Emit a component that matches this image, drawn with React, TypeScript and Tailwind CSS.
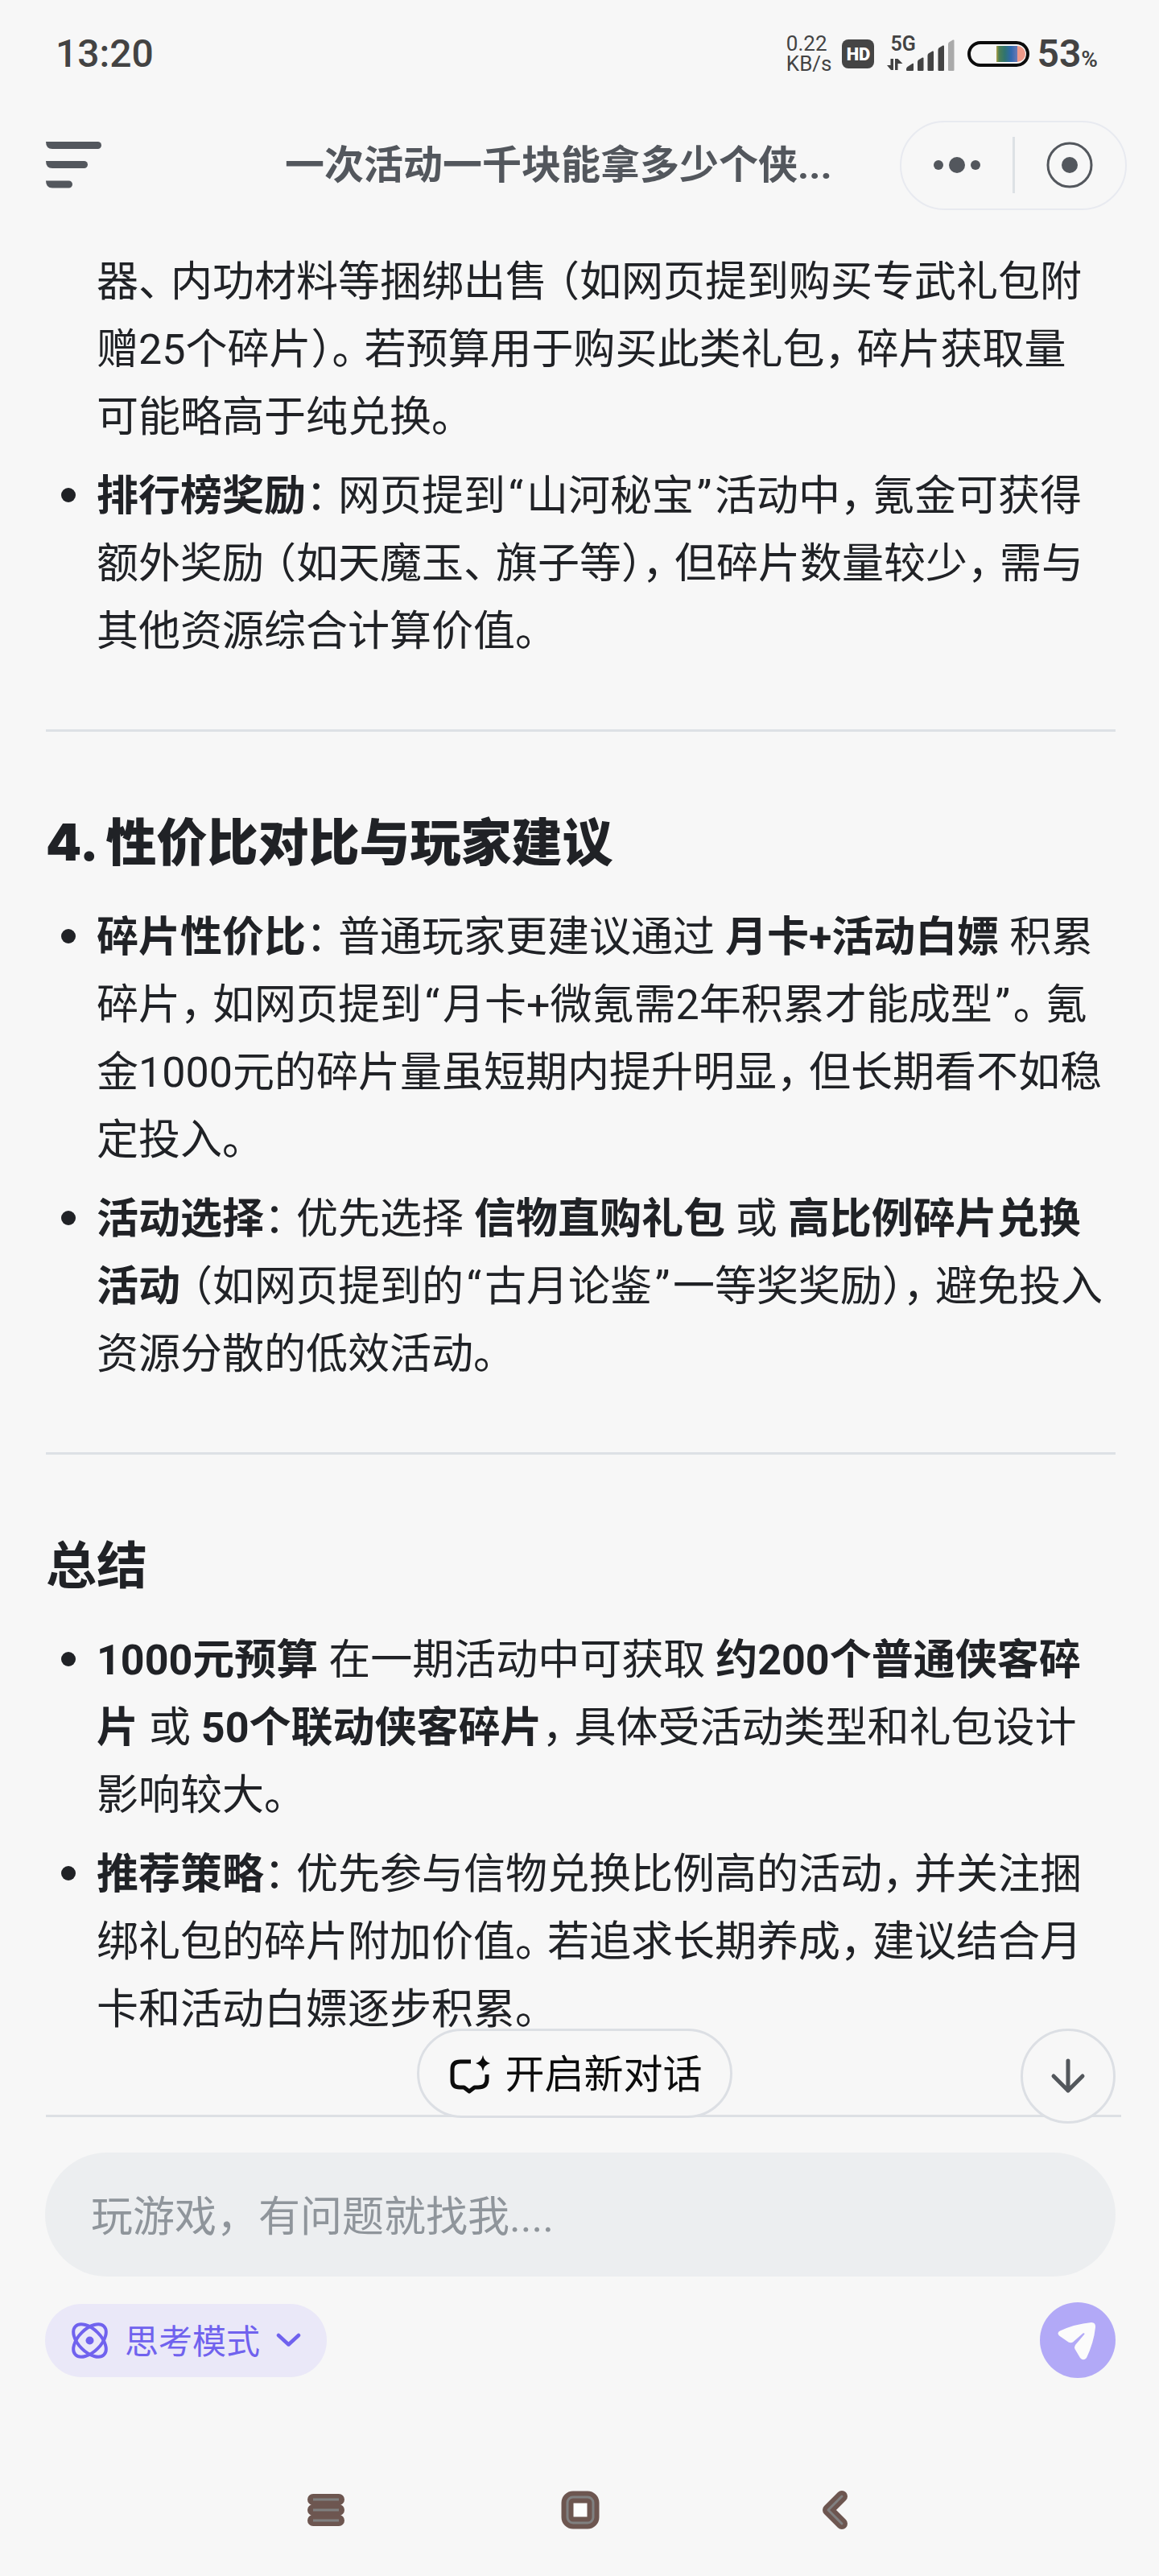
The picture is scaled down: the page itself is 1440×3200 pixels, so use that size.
import type { ReactNode } from "react"

const sections = [
  {
    title: "",
    items: [
      {
        continued: true,
        lines: [
          "器、内功材料等捆绑出售（如网页提到购买专武礼包附",
          "赠25个碎片）。若预算用于购买此类礼包，碎片获取量",
          "可能略高于纯兑换。",
        ],
      },
      {
        lines: [
          "**排行榜奖励**：网页提到“山河秘宝”活动中，氪金可获得",
          "额外奖励（如天魔玉、旗子等），但碎片数量较少，需与",
          "其他资源综合计算价值。",
        ],
      },
    ],
  },
  {
    title: "4. 性价比对比与玩家建议",
    heavy: true,
    items: [
      {
        lines: [
          "**碎片性价比**：普通玩家更建议通过 **月卡+活动白嫖** 积累",
          "碎片，如网页提到“月卡+微氪需2年积累才能成型”。氪",
          "金1000元的碎片量虽短期内提升明显，但长期看不如稳",
          "定投入。",
        ],
      },
      {
        lines: [
          "**活动选择**：优先选择 **信物直购礼包** 或 **高比例碎片兑换**",
          "**活动**（如网页提到的“古月论鉴”一等奖奖励），避免投入",
          "资源分散的低效活动。",
        ],
      },
    ],
  },
  {
    title: "总结",
    items: [
      {
        lines: [
          "**1000元预算** 在一期活动中可获取 **约200个普通侠客碎**",
          "**片** 或 **50个联动侠客碎片**，具体受活动类型和礼包设计",
          "影响较大。",
        ],
      },
      {
        lines: [
          "**推荐策略**：优先参与信物兑换比例高的活动，并关注捆",
          "绑礼包的碎片附加价值。若追求长期养成，建议结合月",
          "卡和活动白嫖逐步积累。",
        ],
      },
    ],
  },
]

// Full-width punctuation is set narrower than a full character.
function punctuate(text: string) {
  return text.split(/(）(?=[，。])|[（）“”，。、：])/).map((part, i) => {
    if (i % 2 === 0) return part
    const next = text[text.indexOf(part) + 1]
    let style = "w-10 text-left"
    if (part === "（") style = "w-10 text-right"
    if (part === "“" || part === "”") style = "w-[26px] text-center"
    if (part === "）" && (next === "，" || next === "。")) style = "w-[26px] text-left"
    return (
      <span key={i} className={`inline-block [font-feature-settings:'halt'] ${style}`}>
        {part}
      </span>
    )
  })
}

function Line({ text }: { text: string }) {
  const parts: ReactNode[] = text
    .split("**")
    .map((part, i) =>
      i % 2 === 1 ? (
        <strong key={i} className="font-bold">
          {part}
        </strong>
      ) : (
        <span key={i}>{punctuate(part)}</span>
      ),
    )
  return <span className="block whitespace-nowrap">{parts}</span>
}

function StatusBar() {
  return (
    <div className="flex h-[134px] items-center justify-between pl-[69px] pr-[76px] text-[#434343]">
      <div className="text-[48px] leading-none font-medium">13:20</div>
      <div className="flex items-center">
        <div className="mr-[13px] text-[26px] leading-[25px]">
          <div>0.22</div>
          <div>KB/s</div>
        </div>
        <div className="mr-4 flex h-9 w-10 items-center justify-center rounded-lg bg-[#454545] text-[22px] font-black text-white">
          HD
        </div>
        <div className="relative mr-4 h-11 w-[84px]">
          <span className="absolute top-0 left-1 text-[25px] leading-5 font-semibold">5G</span>
          <svg className="absolute inset-0" width="84" height="44" viewBox="0 0 84 44" fill="#434343">
            <path d="M4.500 28h3.500v14h-3L0 36h4.500zM10 28h3.500l6 6H13.500v8H10z" />
            <path d="M24 41q0-2 1.500-3l6-4q1-.5 1.500 0v8q0 1-1 1h-7q-1 0-1-1z" />
            <path d="M38 32q0-1.500 1-2.500l5-3q1.500-.5 1.500 1V42q0 1-1 1H39q-1 0-1-1z" />
            <path d="M50.500 24q0-1.500 1-2.500l5-3q1.500-.5 1.500 1V42q0 1-1 1h-5.500q-1 0-1-1z" />
            <path d="M63.500 17q0-1.500 1-2.500l5-3q1.500-.5 1.500 1V42q0 1-1 1h-5.500q-1 0-1-1z" />
            <path d="M76 10q0-1.500 1-2.500l5-3q1.500-.5 1.500 1V42q0 1-1 1H77q-1 0-1-1z" fill="#aaaaaa" />
          </svg>
        </div>
        <svg className="mr-[9px]" width="77" height="32" viewBox="0 0 77 32">
          <defs>
            <linearGradient id="charge" x1="0" x2="1">
              <stop offset="0" stopColor="#b3a24a" />
              <stop offset="0.12" stopColor="#4f7f52" />
              <stop offset="0.4" stopColor="#2f7470" />
              <stop offset="0.7" stopColor="#2f68ad" />
              <stop offset="1" stopColor="#6a7ab5" />
            </linearGradient>
          </defs>
          <rect x="2" y="2" width="73" height="28" rx="14" fill="none" stroke="#0c0c0c" strokeWidth="4" />
          <rect x="36" y="6" width="26" height="20" fill="url(#charge)" />
          <path d="M62 6a10 10 0 0 1 0 20z" fill="#ef9a8a" />
        </svg>
        <div className="flex items-baseline leading-none">
          <span className="text-[48px] font-semibold">53</span>
          <span className="text-[28px] font-semibold">%</span>
        </div>
      </div>
    </div>
  )
}

function Header() {
  return (
    <header className="flex h-[142px] items-center pr-10 pl-[57px] text-[#53575d]">
      <button aria-label="菜单" className="mr-[228px]">
        <svg width="69" height="58" viewBox="0 0 69 58" fill="currentColor">
          <path d="M0 0h64.500a4.500 4.500 0 0 1 0 9H8Q0 9 0 0z" />
          <path d="M0 24h47.500a4.500 4.500 0 0 1 0 9H8Q0 33 0 24z" />
          <path d="M0 48.500h28.500a4.500 4.500 0 0 1 0 9H8Q0 57.500 0 48.500z" />
        </svg>
      </button>
      <h1 className="flex-1 pt-0.5 text-[49px] leading-[60px] font-bold whitespace-nowrap">一次活动一千块能拿多少个侠...</h1>
      <div className="flex h-[111px] w-[282px] items-center rounded-full border-2 border-[#e8eaf0]">
        <button aria-label="更多" className="flex flex-1 justify-center">
          <svg width="60" height="22" viewBox="0 0 60 22" fill="currentColor">
            <circle cx="7" cy="11" r="6" />
            <circle cx="30" cy="11" r="10" />
            <circle cx="53" cy="11" r="6" />
          </svg>
        </button>
        <span className="h-[70px] w-[3px] bg-[#dde1e5]" />
        <button aria-label="关闭" className="flex flex-1 justify-center">
          <svg width="58" height="58" viewBox="0 0 58 58" fill="none">
            <circle cx="29" cy="29" r="27" stroke="currentColor" strokeWidth="3" />
            <circle cx="29" cy="29" r="10" fill="currentColor" />
          </svg>
        </button>
      </div>
    </header>
  )
}

function Composer() {
  return (
    <footer className="relative mt-[88px]">
      <div className="mr-[47px] ml-[57px] h-[3px] bg-[#dde0e4]" />
      <button className="absolute -top-[107px] left-1/2 flex h-[111px] w-[392px] -translate-x-[202px] items-center justify-center gap-[18px] rounded-full border-3 border-[#dcdfe4] bg-[#f7f7f7] pt-1 pl-1 text-[49px] text-[#0c0c0c]">
        <svg width="50" height="50" viewBox="0 0 50 50" fill="none">
          <path
            d="M26 8H13Q3 8 3 17V31Q3 40 12 40H17.500L24 45L30.500 40H35Q46 40 46 30V24"
            stroke="currentColor"
            strokeWidth="5"
            strokeLinejoin="round"
          />
          <path d="M41 0Q42.500 8 50 10Q42.500 12 41 20Q39.500 12 32 10Q39.500 8 41 0z" fill="currentColor" />
        </svg>
        开启新对话
      </button>
      <button
        aria-label="回到底部"
        className="absolute -top-[107px] right-[54px] flex size-[118px] items-center justify-center rounded-full border-3 border-[#dcdfe4] bg-[#f7f7f7] text-[#53575c]"
      >
        <svg width="44" height="44" viewBox="0 0 44 44" fill="none" stroke="currentColor" strokeWidth="5" strokeLinecap="round">
          <path d="M22 3V40M4 22L22 40L40 22" strokeLinejoin="round" />
        </svg>
      </button>
      <div className="pt-[44px] pr-[54px] pl-14">
        <input
          aria-label="提问"
          placeholder="玩游戏，有问题就找我...."
          className="block h-[154px] w-full rounded-full bg-[#eceef0] px-[57px] pt-1.5 text-[52px] outline-none placeholder:text-[#8f959b] placeholder:opacity-100"
        />
        <div className="mt-8 flex items-center justify-between">
          <button className="flex h-[91px] items-center rounded-full bg-[#eae8f8] pr-8 pl-[33px] text-[42px] text-[#7062ee]">
            <svg className="mr-[21px]" width="45" height="45" viewBox="0 0 45 45" fill="none" stroke="currentColor" strokeWidth="4">
              <ellipse cx="22.500" cy="22.500" rx="14" ry="25" transform="rotate(45 22.500 22.500)" />
              <ellipse cx="22.500" cy="22.500" rx="14" ry="25" transform="rotate(-45 22.500 22.500)" />
              <circle cx="22.500" cy="22.500" r="5" fill="currentColor" stroke="none" />
            </svg>
            <span className="pt-1">思考模式</span>
            <svg className="ml-5" width="31" height="18" viewBox="0 0 31 18" fill="none">
              <path d="M3 3L15.500 14.500L28 3" stroke="currentColor" strokeWidth="4.500" strokeLinecap="round" strokeLinejoin="round" />
            </svg>
          </button>
          <button aria-label="发送" className="size-[94px] rounded-full bg-[#b2a9f7]">
            <svg width="94" height="94" viewBox="0 0 94 94" fill="#fbfbfb">
              <path d="M25 35.500Q43 27 64 25Q69.500 25 69 31Q67 50 58 69Q54 73.500 50 69L43.500 58Q42.500 55.500 44 53L55.500 39.500Q55.500 37.500 53.500 38.500L41 49.500Q38.500 51 35.500 49.500L24 41.500Q20.500 38 25 35.500z" />
            </svg>
          </button>
        </div>
      </div>
    </footer>
  )
}

function NavBar() {
  return (
    <nav className="mt-auto flex h-[165px] items-center justify-center gap-[269px] pl-1" aria-label="系统导航">
      <button aria-label="最近任务">
        <svg width="46" height="48" viewBox="0 0 46 48" fill="none" strokeLinecap="round">
          <path d="M7 11H39M7 24H39M7 37H39" stroke="#6d5650" strokeWidth="14" />
          <path d="M7 11H39M7 24H39M7 37H39" stroke="#808080" strokeWidth="3" strokeLinecap="butt" />
        </svg>
      </button>
      <button aria-label="主页">
        <svg width="48" height="48" viewBox="0 0 48 48" fill="#fdfdfd">
          <rect x="8" y="8" width="32" height="32" rx="7" stroke="#6d5650" strokeWidth="15" />
          <rect x="8" y="8" width="32" height="32" rx="7" fill="none" stroke="#808080" strokeWidth="3" />
        </svg>
      </button>
      <button aria-label="返回">
        <svg width="48" height="48" viewBox="0 0 48 48" fill="none" strokeLinecap="round" strokeLinejoin="round">
          <path d="M32 7L15 24L32 41" stroke="#6d5650" strokeWidth="14" />
          <path d="M32 7L15 24L32 41" stroke="#808080" strokeWidth="3" />
        </svg>
      </button>
    </nav>
  )
}

export default function App() {
  return (
    <div className="flex min-h-screen flex-col overflow-hidden bg-[#f7f7f7] font-[Roboto,'Noto_Sans_CJK_SC',sans-serif] text-[#202226]">
      <StatusBar />
      <Header />
      <main className="pt-[33px] pr-[54px] pl-[57px]">
        {sections.map((section, index) => (
          <section key={index}>
            {index > 0 && <hr className="mt-[79px] mb-[95px] border-t-3 border-[#dde1e5]" />}
            {section.title && (
              <h2
                className={`mb-[35px] font-[Inter,'Noto_Sans_CJK_SC',sans-serif] text-[63px] leading-[84px] ${
                  section.heavy ? "font-black" : "font-bold"
                }`}
              >
                {section.title}
              </h2>
            )}
            <ul className="space-y-[14px] text-[52px] leading-[84px]">
              {section.items.map((item) => (
                <li key={item.lines[0]} className="flex">
                  <span
                    className={`mt-[31px] mr-[26px] ml-[19px] size-[18px] shrink-0 rounded-full ${
                      "continued" in item ? "" : "bg-[#202226]"
                    }`}
                  />
                  <p>
                    {item.lines.map((line) => (
                      <Line key={line} text={line} />
                    ))}
                  </p>
                </li>
              ))}
            </ul>
          </section>
        ))}
      </main>
      <Composer />
      <NavBar />
    </div>
  )
}
